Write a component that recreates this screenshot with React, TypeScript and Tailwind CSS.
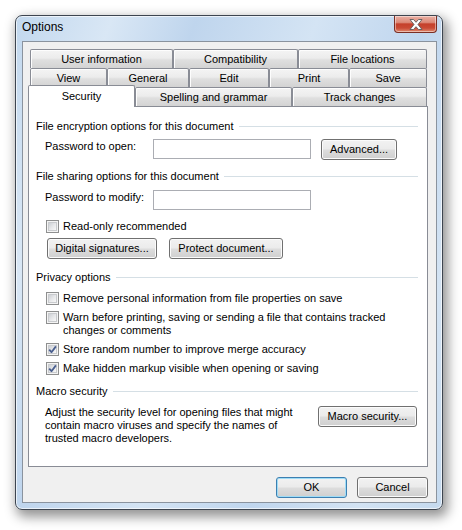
import React from "react";

function Btn({ className, children, def }: { className: string; children: React.ReactNode; def?: boolean }) {
  return (
    <div
      className={`${className} flex items-center justify-center rounded-[3px] border ${
        def ? "border-[#3c7fb1] shadow-[inset_0_0_0_1px_#9fdcf6]" : "border-[#707070] shadow-[inset_0_0_0_1px_#fbfbfb]"
      } bg-[linear-gradient(#f2f2f2_0%,#ebebeb_48%,#dddddd_52%,#cfcfcf_100%)] leading-[15px] whitespace-nowrap text-black`}
    >
      {children}
    </div>
  );
}

function Check({ checked }: { checked?: boolean }) {
  return (
    <div className="relative w-[13px] h-[13px] shrink-0 border border-[#8e8f8f] bg-[#f4f4f4] p-[1px]">
      <div className="w-full h-full border border-[#c9cbce] bg-[linear-gradient(135deg,#cdd0d5_0%,#e6e7e9_50%,#f8f8f8_100%)]" />
      {checked && (
        <svg className="absolute left-0 top-0" width="11" height="11" viewBox="0 0 11 11">
          <path d="M2.2 5.6 L4.5 8.2 L8.9 2.4" fill="none" stroke="#4a5f8f" strokeWidth="1.8" strokeLinejoin="round" />
        </svg>
      )}
    </div>
  );
}

function Heading({ children, mt }: { children: React.ReactNode; mt: string }) {
  return (
    <div className={`${mt} h-[15px] flex items-center pl-[7px] pr-[9px]`}>
      <span className="whitespace-nowrap leading-[15px]">{children}</span>
      <div className="flex-1 h-px bg-[#d5dfe5] ml-[5px]" />
    </div>
  );
}

const tabCls =
  "h-[19px] shrink-0 flex items-center justify-center border border-b-0 border-[#898c95] rounded-t-[2px] bg-[linear-gradient(#f4f4f4_0%,#ececec_45%,#dfdfdf_55%,#d3d3d3_100%)] shadow-[inset_1px_1px_0_#fdfdfd] leading-[15px] whitespace-nowrap";

export default function App() {
  return (
    <div
      className="w-[462px] h-[530px] bg-white pt-[15px] pl-[15px] text-[11px] text-black"
      style={{ fontFamily: "'Liberation Sans', Arial, sans-serif" }}
    >
      <div className="w-[428px] h-[495px] rounded-[7px] border border-[#3d4550] flex flex-col bg-[linear-gradient(110deg,#c2d8ee_0%,#d9e7f5_16%,#bfd5ed_30%,#d4e4f4_50%,#c0d6ee_68%,#d3e3f3_86%,#c5daef_100%)] shadow-[inset_0_0_0_1px_rgba(255,255,255,0.65),3px_5px_12px_2px_rgba(0,0,0,0.42)]">
        {/* title bar */}
        <div className="h-[25px] flex items-start">
          <span className="pl-[6px] mt-[4px] leading-[15px] text-[12px]">Options</span>
          <div className="ml-auto mr-[5px] w-[43px] h-[17px] rounded-b-[4px] border border-t-0 border-[#7a2e24] bg-[linear-gradient(#eab0a4_0%,#dc8a79_40%,#c5402b_50%,#c94a35_75%,#e08b70_100%)] shadow-[inset_0_0_0_1px_rgba(255,255,255,0.45)] flex items-center justify-center">
            <svg width="14" height="11" viewBox="0 0 14 11">
              <polygon
                points="1,0.5 4.5,0.5 7,3.3 9.5,0.5 13,0.5 9,5.5 13,10.5 9.5,10.5 7,7.7 4.5,10.5 1,10.5 5,5.5"
                fill="#ffffff"
                stroke="#5b5b5b"
                strokeWidth="0.9"
                strokeLinejoin="round"
              />
            </svg>
          </div>
        </div>

        {/* client area */}
        <div className="ml-[6px] mr-[5px] h-[462px] border border-[#8a939e] bg-[#f0f0f0] pl-[5px] pt-[7px]">
          <div className="w-[400px] flex flex-col">
            <div className="flex h-[19px] pl-[2px]">
              <div className={`${tabCls} w-[143px]`}>User information</div>
              <div className={`${tabCls} w-[125px]`}>Compatibility</div>
              <div className={`${tabCls} w-[129px]`}>File locations</div>
            </div>
            <div className="flex h-[19px] pl-[2px]">
              <div className={`${tabCls} w-[77px]`}>View</div>
              <div className={`${tabCls} w-[82px]`}>General</div>
              <div className={`${tabCls} w-[80px]`}>Edit</div>
              <div className={`${tabCls} w-[80px]`}>Print</div>
              <div className={`${tabCls} w-[78px]`}>Save</div>
            </div>
            <div className="flex h-[19px]">
              <div className="relative z-10 self-start -mt-[2px] h-[22px] w-[107px] shrink-0 flex items-center justify-center pb-[1px] bg-white border border-b-0 border-[#898c95] rounded-t-[2px] leading-[15px]">
                Security
              </div>
              <div className={`${tabCls} w-[157px]`}>Spelling and grammar</div>
              <div className={`${tabCls} w-[135px]`}>Track changes</div>
            </div>

            {/* panel */}
            <div className="w-[400px] h-[361px] border border-[#898c95] bg-white flex flex-col">
              <Heading mt="mt-[12px]">File encryption options for this document</Heading>
              <div className="mt-[5px] h-[21px] flex items-start pl-[16px]">
                <span className="w-[108px] shrink-0 leading-[15px]">Password to open:</span>
                <div className="w-[158px] h-[20px] border border-[#abadb3] bg-white" />
                <Btn className="ml-[10px] w-[76px] h-[21px]">Advanced...</Btn>
              </div>

              <Heading mt="mt-[9px]">File sharing options for this document</Heading>
              <div className="mt-[6px] h-[20px] flex items-start pl-[16px]">
                <span className="w-[108px] shrink-0 leading-[15px]">Password to modify:</span>
                <div className="w-[158px] h-[20px] border border-[#abadb3] bg-white" />
              </div>
              <div className="mt-[9px] h-[15px] flex items-center pl-[17px]">
                <Check />
                <span className="ml-[4px] leading-[15px]">Read-only recommended</span>
              </div>
              <div className="mt-[4px] flex pl-[18px]">
                <Btn className="w-[110px] h-[21px]">Digital signatures...</Btn>
                <Btn className="ml-[12px] w-[114px] h-[21px]">Protect document...</Btn>
              </div>

              <Heading mt="mt-[11px]">Privacy options</Heading>
              <div className="mt-[6px] h-[15px] flex items-center pl-[17px]">
                <Check />
                <span className="ml-[4px] leading-[15px] whitespace-nowrap">
                  Remove personal information from file properties on save
                </span>
              </div>
              <div className="mt-[5px] flex items-start pl-[17px]">
                <Check />
                <span className="ml-[4px] leading-[13px] whitespace-nowrap">
                  Warn before printing, saving or sending a file that contains tracked
                  <br />
                  changes or comments
                </span>
              </div>
              <div className="mt-[5px] h-[15px] flex items-center pl-[17px]">
                <Check checked />
                <span className="ml-[4px] leading-[15px] whitespace-nowrap">
                  Store random number to improve merge accuracy
                </span>
              </div>
              <div className="mt-[4px] h-[15px] flex items-center pl-[17px]">
                <Check checked />
                <span className="ml-[4px] leading-[15px] whitespace-nowrap">
                  Make hidden markup visible when opening or saving
                </span>
              </div>

              <Heading mt="mt-[8px]">Macro security</Heading>
              <div className="mt-[7px] flex items-start pl-[16px] pr-[10px]">
                <p className="leading-[13px] whitespace-nowrap">
                  Adjust the security level for opening files that might
                  <br />
                  contain macro viruses and specify the names of
                  <br />
                  trusted macro developers.
                </p>
                <Btn className="ml-auto w-[99px] h-[21px]">Macro security...</Btn>
              </div>
            </div>

            <div className="mt-[10px] flex justify-end gap-[10px]">
              <Btn def className="w-[71px] h-[21px]">OK</Btn>
              <Btn className="w-[71px] h-[21px]">Cancel</Btn>
            </div>
          </div>
        </div>
      </div>
    </div>
  );
}
